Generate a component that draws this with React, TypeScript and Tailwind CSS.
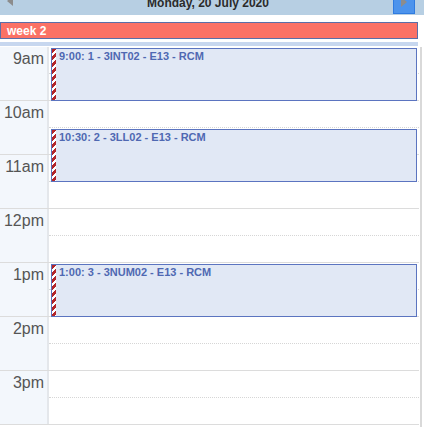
import React from "react";

const HOURS = ["9am", "10am", "11am", "12pm", "1pm", "2pm", "3pm"];
const ROW = 54;

type CalEvent = { label: string; start: number; length: number };

const EVENTS: CalEvent[] = [
  { label: "9:00: 1 - 3INT02 - E13 - RCM", start: 0, length: 1 },
  { label: "10:30: 2 - 3LL02 - E13 - RCM", start: 1.5, length: 1 },
  { label: "1:00: 3 - 3NUM02 - E13 - RCM", start: 4, length: 1 },
];

function EventBox({ ev }: { ev: CalEvent }) {
  return (
    <div
      className="absolute left-[51px] w-[366px] flex border border-[#5b74c0] bg-[#e1e8f5]"
      style={{ top: ev.start * ROW + 1, height: ev.length * ROW - 1 }}
    >
      <div className="w-[4px] shrink-0 bg-[repeating-linear-gradient(135deg,#b3262b_0px,#b3262b_3px,#ffffff_3px,#ffffff_5px)]" />
      <div className="pl-[3px] pt-[1px] text-[11px] font-bold leading-[12px] text-[#4f68b2]">{ev.label}</div>
    </div>
  );
}

export default function App() {
  return (
    <div className="w-[424px] h-[430px] overflow-hidden bg-white font-['Liberation_Sans',Arial,sans-serif]">
      <div className="-mt-[10px] h-[25px] bg-[#b7cfe3] flex items-start relative">
        <div className="ml-[7px] mt-[6px] w-0 h-0 border-y-[5px] border-y-transparent border-r-[6px] border-r-[#8c8c8c]" />
        <div className="flex-1 text-center text-[12px] font-bold leading-[14px] pt-[6px] text-[#2b2b2b] pl-[10px]">
          Monday, 20 July 2020
        </div>
        <div className="mr-[9px] w-[22px] h-[24px] bg-[#4c93ec] border border-[#2f7be0] flex justify-center">
          <div className="mt-[6px] w-0 h-0 border-y-[5px] border-y-transparent border-l-[6px] border-l-[#8c8c8c]" />
        </div>
      </div>

      <div className="mt-[7px] w-[418px] h-[17px] bg-[#fb7165] border border-[#5a6ea8] flex items-center">
        <span className="pl-[6px] text-[12px] font-bold text-white leading-none">week 2</span>
      </div>

      <div className="mt-[3px] w-[418px] h-[4px] bg-[#c7d7ef]" />

      <div className="flex mt-[1px]">
        <div className="relative w-[419px]">
          {HOURS.map((h) => (
            <div key={h} className="flex h-[54px] border-b border-[#dcdcdc]">
              <div className="w-[49px] shrink-0 bg-[#f3f7fc] border-r-2 border-[#e4e7eb] text-right pr-[3px] text-[16px] leading-[18px] pt-[3px] text-[#555555]">
                {h}
              </div>
              <div className="flex-1 flex flex-col">
                <div className="h-[27px] border-b border-dotted border-[#d6d6d6]" />
              </div>
            </div>
          ))}
          {EVENTS.map((ev) => (
            <EventBox key={ev.label} ev={ev} />
          ))}
        </div>
        <div className="w-[2px] ml-[1px] bg-[#d9d9d9] h-[380px]" />
      </div>
    </div>
  );
}
